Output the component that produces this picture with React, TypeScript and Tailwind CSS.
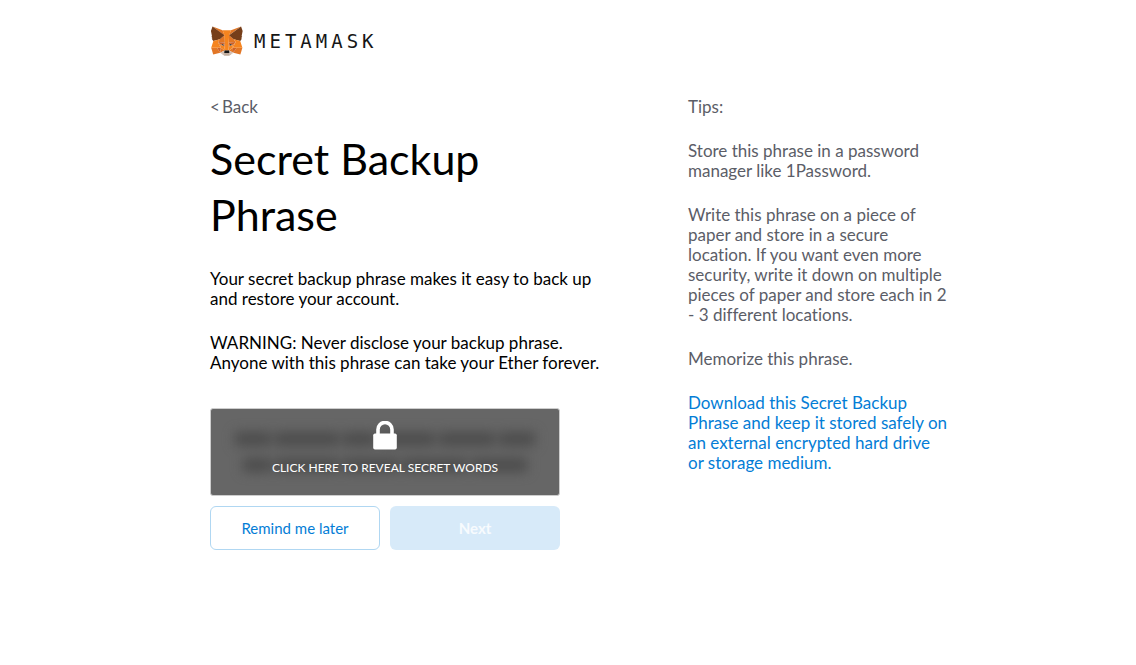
import React from "react";

const tips = [
  "Store this phrase in a password manager like 1Password.",
  "Write this phrase on a piece of paper and store in a secure location. If you want even more security, write it down on multiple pieces of paper and store each in 2 - 3 different locations.",
  "Memorize this phrase.",
];

function Fox() {
  return (
    <svg viewBox="0 0 35 33" className="h-8 w-[33px]" aria-hidden="true">
      <path d="m32.9582 1-13.1341 9.7183 2.4424-5.72731z" fill="#e17726" />
      <g fill="#e27625">
        <path d="m2.66296 1 13.01714 9.809-2.3254-5.81802z" />
        <path d="m28.2295 23.5335-3.4947 5.3386 7.4829 2.0603 2.1436-7.2823z" />
        <path d="m1.27281 23.6501 2.13055 7.2823 7.46994-2.0603-3.48166-5.3386z" />
        <path d="m10.4706 14.5149-2.0786 3.1358 7.405.3369-.2469-7.969z" />
        <path d="m25.1505 14.5149-5.1575-4.58704-.1688 8.05974 7.4049-.3369z" />
        <path d="m10.8733 28.8721 4.4819-2.1639-3.8583-3.0062z" />
        <path d="m20.2659 26.7082 4.4689 2.1639-.6105-5.1701z" />
      </g>
      <g fill="#d5bfb2">
        <path d="m24.7348 28.8721-4.469-2.1639.3638 2.9025-.039 1.231z" />
        <path d="m10.8732 28.8721 4.1572 1.9696-.026-1.231.3508-2.9025z" />
      </g>
      <g fill="#233447">
        <path d="m15.1084 21.7842-3.7155-1.0884 2.6243-1.2051z" />
        <path d="m20.5126 21.7842 1.0913-2.2935 2.6372 1.2051z" />
      </g>
      <g fill="#cc6228">
        <path d="m10.8733 28.8721.6495-5.3386-4.13117.1167z" />
        <path d="m24.0982 23.5335.6366 5.3386 3.4946-5.2219z" />
        <path d="m27.2291 17.6507-7.405.3369.6885 3.7966 1.0913-2.2935 2.6372 1.2051z" />
        <path d="m11.3929 20.6958 2.6242-1.2051 1.0913 2.2935.6885-3.7966-7.40495-.3369z" />
      </g>
      <g fill="#e27525">
        <path d="m8.392 17.6507 3.1049 6.0513-.1039-3.0062z" />
        <path d="m24.2412 20.6958-.1169 3.0062 3.1049-6.0513z" />
        <path d="m15.797 17.9876-.6886 3.7967.8704 4.4833.1949-5.9087z" />
        <path d="m19.8242 17.9876-.3638 2.3584.1819 5.9216.8704-4.4833z" />
      </g>
      <g fill="#f5841f">
        <path d="m20.5127 21.7842-.8704 4.4834.6236.4406 3.8584-3.0062.1169-3.0062z" />
        <path d="m11.3929 20.6958.104 3.0062 3.8583 3.0062.6236-.4406-.8704-4.4834z" />
      </g>
      <path
        fill="#c0ac9d"
        d="m20.5906 30.8417.039-1.231-.3378-.2851h-4.9626l-.3248.2851.026 1.231-4.1572-1.9696 1.4551 1.1921 2.9489 2.0344h5.0536l2.962-2.0344 1.442-1.1921z"
      />
      <path
        fill="#161616"
        d="m20.2659 26.7082-.6236-.4406h-3.6635l-.6236.4406-.3508 2.9025.3248-.2851h4.9626l.3378.2851z"
      />
      <g fill="#763e1a">
        <path d="m33.5168 11.3532 1.1043-5.36447-1.6629-4.98873-12.6923 9.3944 4.8846 4.1205 6.8983 2.0085 1.52-1.7752-.6626-.4795 1.0523-.9588-.8054-.622 1.0523-.8034z" />
        <path d="m1 5.98873 1.11724 5.36447-.71451.5313 1.06527.8034-.80545.622 1.05228.9588-.66255.4795 1.51997 1.7752 6.89835-2.0085 4.8846-4.1205-12.69233-9.3944z" />
      </g>
      <g fill="#f5841f">
        <path d="m32.0489 16.5234-6.8983-2.0085 2.0786 3.1358-3.1049 6.0513 4.1052-.0519h6.1318z" />
        <path d="m10.4705 14.5149-6.89828 2.0085-2.29944 7.1267h6.11883l4.10519.0519-3.10487-6.0513z" />
        <path d="m19.8241 17.9876.4417-7.5932 2.0007-5.4034h-8.9119l2.0006 5.4034.4417 7.5932.1689 2.3842.013 5.8958h3.6635l.013-5.8958z" />
      </g>
    </svg>
  );
}

function Lock() {
  return (
    <svg viewBox="0 0 24 29" className="h-[29px] w-6" aria-hidden="true">
      <path
        d="M5 13V8.5a7 7 0 0 1 14 0V13"
        fill="none"
        stroke="#fff"
        strokeWidth="3.6"
      />
      <rect x="0.2" y="12.5" width="23.6" height="16" rx="1.8" fill="#fff" />
    </svg>
  );
}

function HiddenWords() {
  return (
    <span
      aria-hidden="true"
      className="col-start-1 row-start-1 flex flex-col items-center gap-3 self-center blur-[6px]"
    >
      <span className="flex gap-1">
        <span className="h-3.5 w-9 bg-[#4c4c4c]" />
        <span className="h-3.5 w-16 bg-[#4c4c4c]" />
        <span className="h-3.5 w-8 bg-[#4c4c4c]" />
        <span className="h-3.5 w-14 bg-[#4c4c4c]" />
        <span className="h-3.5 w-14 bg-[#4c4c4c]" />
        <span className="h-3.5 w-9 bg-[#4c4c4c]" />
      </span>
      <span className="flex gap-1">
        <span className="h-3.5 w-7 bg-[#4c4c4c]" />
        <span className="h-3.5 w-16 bg-[#4c4c4c]" />
        <span className="h-3.5 w-14 bg-[#4c4c4c]" />
        <span className="h-3.5 w-16 bg-[#4c4c4c]" />
        <span className="h-3.5 w-14 bg-[#4c4c4c]" />
      </span>
    </span>
  );
}

export default function App() {
  return (
    <div className="min-h-screen bg-white pt-[25px] pb-10 font-['Lato',sans-serif] text-[17px] leading-5 text-black [font-variant-ligatures:none]">
      <div className="mx-auto max-w-[768px] pl-[26px]">
        <header className="flex h-8 items-center gap-[11px]">
          <Fox />
          <span className="font-['DejaVu_Sans_Mono',monospace] text-[19px] tracking-[4px] text-[#161616]">
            METAMASK
          </span>
        </header>

        <main className="mt-10 flex items-start justify-between gap-8">
          <section className="w-[392px]">
            <a href="#back" className="flex gap-0.5 text-[#5b5d67]">
              <span>&lt;</span>
              <span>Back</span>
            </a>
            <h1 className="mt-[14px] w-[350px] text-[43px] leading-14">
              Secret Backup Phrase
            </h1>
            <p className="mt-[26px]">
              Your secret backup phrase makes it easy to back up and restore your account.
            </p>
            <p className="mt-6">
              WARNING: Never disclose your backup phrase. Anyone with this phrase can take your Ether forever.
            </p>

            <div className="mt-[35px] w-[350px]">
              <button
                type="button"
                className="grid h-[88px] w-full overflow-hidden rounded-[3px] border border-[#cdcdcd] bg-[#666]"
              >
                <HiddenWords />
                <span className="z-10 col-start-1 row-start-1 flex flex-col items-center gap-2 self-center pb-1.5 text-[12px] text-white">
                  <Lock />
                  CLICK HERE TO REVEAL SECRET WORDS
                </span>
              </button>
              <div className="mt-2.5 grid grid-cols-2 gap-2.5 text-[15px]">
                <button
                  type="button"
                  className="h-11 rounded-md border border-[#b0d7f2] bg-white text-[#037dd6]"
                >
                  Remind me later
                </button>
                <button
                  type="button"
                  disabled
                  className="h-11 rounded-md bg-[#d7eaf9] font-bold text-[#f7fbfe]"
                >
                  Next
                </button>
              </div>
            </div>
          </section>

          <aside className="flex w-[264px] flex-col gap-6 pr-1 text-[#5b5d67]">
            <p>Tips:</p>
            {tips.map((tip) => (
              <p key={tip}>{tip}</p>
            ))}
            <a href="#download" className="text-[#037dd6]">
              Download this Secret Backup Phrase and keep it stored safely on an external encrypted hard drive or storage medium.
            </a>
          </aside>
        </main>
      </div>
    </div>
  );
}
